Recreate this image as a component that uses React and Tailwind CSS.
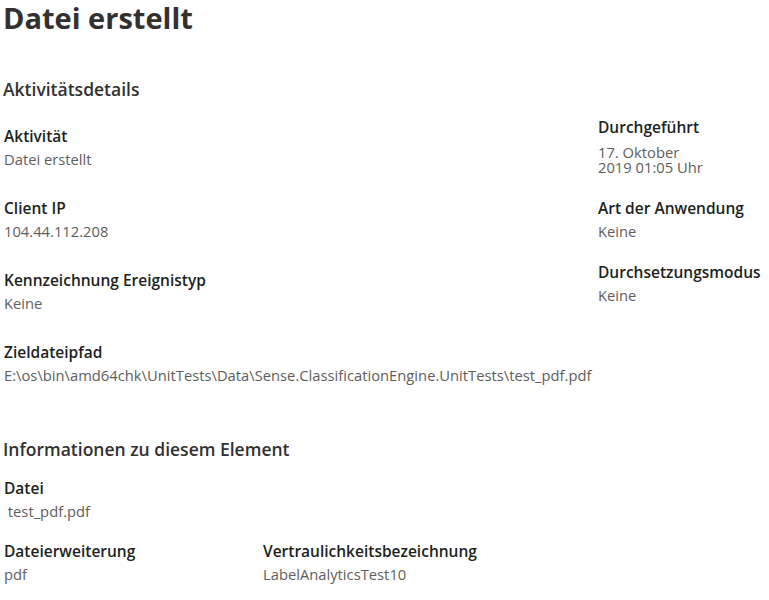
import React from 'react';

const Field = ({ label, value, className = '' }) => (
  <div className={className}>
    <div className="text-[15.5px] font-semibold text-[#201f1e] leading-5">{label}</div>
    <div className="text-[14.75px] text-[#605e5c] leading-5 mt-[3px]">{value}</div>
  </div>
);

export default function App() {
  return (
    <div className="w-[769px] h-[600px] bg-white overflow-hidden pl-[3px] pr-[4px]" style={{ fontFamily: '"Open Sans", "Noto Sans", sans-serif' }}>
      <h1 className="text-[29px] font-bold text-[#323130] leading-[34px] pt-[1px]">Datei erstellt</h1>

      <h2 className="text-[17.5px] font-semibold text-[#323130] leading-6 mt-[42px]">Aktivitätsdetails</h2>

      <div className="flex justify-between mt-[12px]">
        <div className="flex flex-col gap-[29px] pt-[13px] pl-[1px]">
          <Field label="Aktivität" value="Datei erstellt" />
          <Field label="Client IP" value="104.44.112.208" />
          <Field label="Kennzeichnung Ereignistyp" value="Keine" />
          <Field label="Zieldateipfad" value="E:\os\bin\amd64chk\UnitTests\Data\Sense.ClassificationEngine.UnitTests\test_pdf.pdf" />
        </div>

        <div className="w-[167px] flex flex-col pt-[4px]">
          <div>
            <div className="text-[15.5px] font-semibold text-[#201f1e] leading-5">Durchgeführt</div>
            <div className="text-[14.75px] text-[#605e5c] leading-[15px] mt-[8px]">
              <div>17. Oktober</div>
              <div>2019 01:05 Uhr</div>
            </div>
          </div>
          <Field className="mt-[23px]" label="Art der Anwendung" value="Keine" />
          <Field className="mt-[21px]" label="Durchsetzungsmodus" value="Keine" />
        </div>
      </div>

      <h2 className="text-[17.5px] font-semibold text-[#323130] leading-6 mt-[52px]">Informationen zu diesem Element</h2>

      <div className="pl-[1px]">
        <Field className="mt-[17px]" label="Datei" value={'\u00a0test_pdf.pdf'} />

        <div className="flex mt-[20px]">
          <Field className="w-[259px]" label="Dateierweiterung" value="pdf" />
          <Field label="Vertraulichkeitsbezeichnung" value="LabelAnalyticsTest10" />
        </div>
      </div>
    </div>
  );
}
